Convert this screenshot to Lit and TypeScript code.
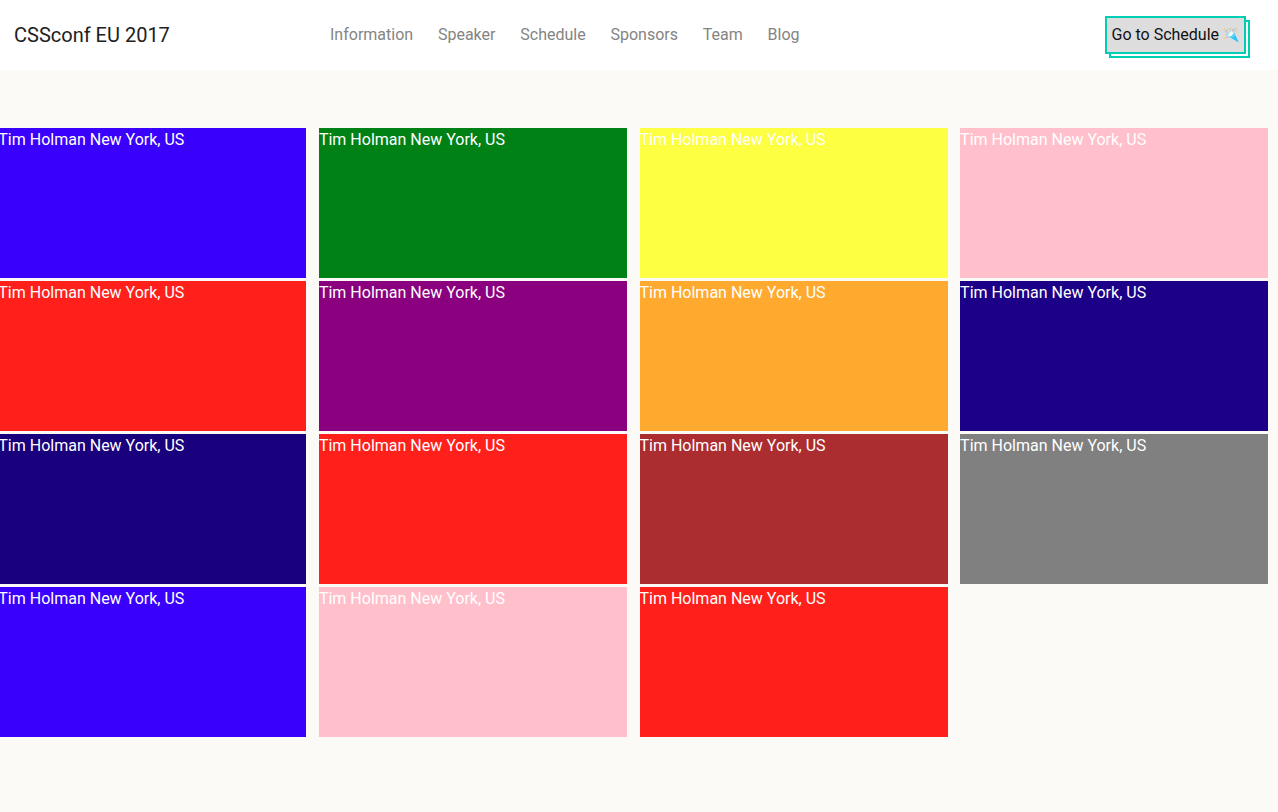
import { LitElement, html, css } from "lit";
import { customElement } from "lit/decorators.js";
import { styleMap } from "lit/directives/style-map.js";

const LINKS = ["Information", "Speaker", "Schedule", "Sponsors", "Team", "Blog"];

const COLORS = [
  "#3900fc", "#008116", "#fcff42", "#ffc0cb",
  "#ff1f1b", "#8a007f", "#ffaa2f", "#1c0087",
  "#19007c", "#ff1f1b", "#ab2d2f", "#808080",
  "#3900fc", "#ffc0cb", "#ff1f1b",
];

@customElement("app-root")
export class AppRoot extends LitElement {
  static styles = css`
    :host {
      display: block;
      min-height: 812px;
      overflow: hidden;
      background: #fbfaf6;
      font: 400 16px/24px Roboto, sans-serif;
    }
    .header {
      display: grid;
      grid-template-columns: 316px 1fr auto;
      align-items: center;
      box-sizing: border-box;
      height: 70px;
      padding: 0 32px 0 14px;
      background: #fff;
    }
    .brand {
      font-size: 20px;
      color: #212121;
    }
    .nav {
      display: flex;
      gap: 24.8px;
    }
    .link {
      color: #848484;
      text-decoration: none;
    }
    .button {
      position: relative;
      z-index: 0;
      display: flex;
      box-sizing: border-box;
      width: 141px;
      height: 38px;
      font: inherit;
      color: #111;
      padding: 0;
      border: 0;
      background: none;
    }
    .face {
      display: flex;
      flex: 1;
      align-items: center;
      gap: 4px;
      box-sizing: border-box;
      height: 38px;
      padding-left: 4.5px;
      border: 2px solid #00ceb4;
      background: #ddd;
      white-space: nowrap;
    }
    .button::before {
      content: "";
      position: absolute;
      z-index: -1;
      inset: 4px -4px -4px 4px;
      border: 2px solid #00ceb4;
      background: #fff;
    }
    .icon {
      flex: none;
      width: 16px;
      height: 16px;
    }
    .grid {
      display: grid;
      grid-template-columns: repeat(4, 308px);
      grid-auto-rows: 150px;
      gap: 3px 12.6px;
      margin: 58px 0 0 -1.7px;
    }
    .tile {
      color: #fff;
    }
  `;

  render() {
    return html`
      <header class="header">
        <div class="brand">CSSconf EU 2017</div>
        <nav class="nav">
          ${LINKS.map((label) => html`<a class="link" href="#">${label}</a>`)}
        </nav>
        <button class="button">
          <span class="face">
            <span>Go to Schedule</span>
            <svg class="icon" viewBox="0 0 16 16" aria-hidden="true">
              <path d="M5 9.2 10.6 4.6 15.8 15.4Z" fill="#29c5f6" />
              <ellipse cx="8" cy="7" rx="3.5" ry="2.1" transform="rotate(-39 8 7)" fill="#effcff" />
              <path d="M5.2 9.2Q10 10 10.7 4.8L12.2 7.8Q11 11 8.5 10.9Z" fill="#5bd5fa" />
              <path d="M6.6 6.2Q3 6.2 1.2 4M8 5.2Q7.3 2 4.5 1.4M9 5Q12.3 4.5 11.8 1.3M6 7.5Q3.5 8.5 2 7.5" fill="none" stroke="#9bd3dc" stroke-width=".9" />
              <g fill="#f1c65c"><path d="M1 1h1.2v1.2H1zM13.2 4.3h1.2v1.2h-1.2zM1 10.5h1.2v1.2H1zM7.3 1h1.2v1.2H7.3z" /></g>
              <g fill="#ed8787"><path d="M3 3h1.2v1.2H3zM9.3 2.2h1.2v1.2H9.3zM3.4 9.5h1.2v1.2H3.4zM12.8 1.5h1v1h-1z" /></g>
            </svg>
          </span>
        </button>
      </header>
      <main class="grid">
        ${COLORS.map(
          (background) => html`<div class="tile" style=${styleMap({ background })}>Tim Holman New York, US</div>`
        )}
      </main>
    `;
  }
}
